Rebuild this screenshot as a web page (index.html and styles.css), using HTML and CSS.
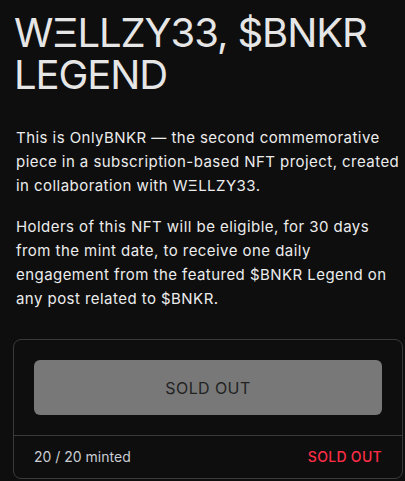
FILE: index.html
```html
<!DOCTYPE html>
<html lang="en">
<head>
    <meta charset="UTF-8">
    <meta name="viewport" content="width=device-width, initial-scale=1.0">
    <title>WΞLLZY33, $BNKR Legend</title>
    <link rel="stylesheet" href="styles.css">
</head>
<body>
    <main class="page">
        <h1 class="title">WΞLLZY33, $BNKR LEGEND</h1>

        <div class="desc">
            <p>This is OnlyBNKR — the second commemorative piece in a subscription-based NFT project, created in collaboration with WΞLLZY33.</p>
            <p>Holders of this NFT will be eligible, for 30 days from the mint date, to receive one daily engagement from the featured $BNKR Legend on any post related to $BNKR.</p>
        </div>

        <!-- mint box -->
        <section class="mint-card">
            <div class="mint-body">
                <button class="mint-btn" disabled>SOLD OUT</button>
            </div>
            <div class="mint-footer">
                <span class="minted">20 / 20 minted</span>
                <span class="status">SOLD OUT</span>
            </div>
        </section>
    </main>
</body>
</html>
```

FILE: styles.css
```css
* {
    box-sizing: border-box;
}

/* page background and font */
body {
    font-family: Inter, "Noto Sans", sans-serif;
    background-color: #0e0e0e;
    color: #ececec;
    margin: 0;
    padding: 0;
}

.page {
    padding: 12px 2px 0 13px;
}

/* title */
.title {
    font-size: 40px;
    line-height: 42px;
    font-weight: 400;
    color: #e6e6e6;
    margin: 0 0 0 1px;
    letter-spacing: -1.1px;
}

/* description */
.desc {
    margin-top: 30px;
    padding-left: 3px;
}

.desc p {
    font-size: 15px;
    line-height: 24px;
    letter-spacing: 0.45px;
    margin: 0 0 17px;
    text-wrap: pretty;
}

.desc p:last-child {
    margin-bottom: 0;
}

/* mint card */
.mint-card {
    margin-top: 28px;
    border: 1px solid #3a3a3a;
    border-radius: 8px;
}

.mint-body {
    padding: 20px;
    border-bottom: 1px solid #3a3a3a;
}

.mint-btn {
    display: block;
    width: 100%;
    height: 55px;
    background-color: #787878;
    color: #232323;
    border: none;
    border-radius: 6px;
    font-family: inherit;
    font-size: 16px;
    letter-spacing: 0.4px;
}

.mint-footer {
    display: flex;
    justify-content: space-between;
    align-items: center;
    padding: 11px 20px;
    font-size: 14px;
    line-height: 20px;
}

.minted {
    color: #c9cdd4;
}

.status {
    color: #ff2d46;
    font-weight: 500;
    letter-spacing: 0.3px;
}
```
